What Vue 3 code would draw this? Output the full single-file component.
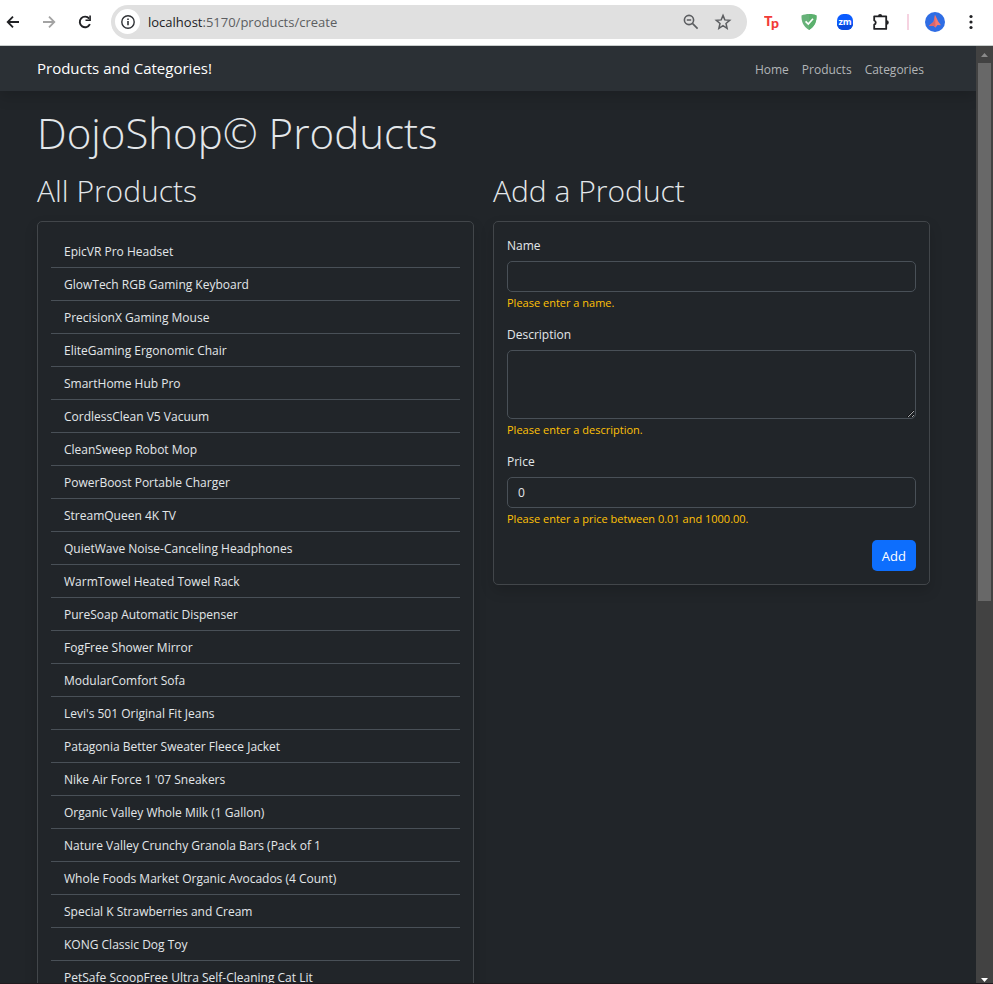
<script setup>
import { ref } from 'vue'

const products = [
  'EpicVR Pro Headset',
  'GlowTech RGB Gaming Keyboard',
  'PrecisionX Gaming Mouse',
  'EliteGaming Ergonomic Chair',
  'SmartHome Hub Pro',
  'CordlessClean V5 Vacuum',
  'CleanSweep Robot Mop',
  'PowerBoost Portable Charger',
  'StreamQueen 4K TV',
  'QuietWave Noise-Canceling Headphones',
  'WarmTowel Heated Towel Rack',
  'PureSoap Automatic Dispenser',
  'FogFree Shower Mirror',
  'ModularComfort Sofa',
  "Levi's 501 Original Fit Jeans",
  'Patagonia Better Sweater Fleece Jacket',
  "Nike Air Force 1 '07 Sneakers",
  'Organic Valley Whole Milk (1 Gallon)',
  'Nature Valley Crunchy Granola Bars (Pack of 1',
  'Whole Foods Market Organic Avocados (4 Count)',
  'Special K Strawberries and Cream',
  'KONG Classic Dog Toy',
  'PetSafe ScoopFree Ultra Self-Cleaning Cat Lit',
]

const name = ref('')
const description = ref('')
const price = ref('0')
</script>

<template>
  <div class="window">
    <header class="toolbar">
      <button class="tool" aria-label="Back">
        <svg width="16" height="16" viewBox="0 0 16 16" fill="none" stroke="#202124" stroke-width="1.8"><path d="M14 8H3M8 2.7L2.7 8L8 13.3" /></svg>
      </button>
      <button class="tool" aria-label="Forward">
        <svg width="16" height="16" viewBox="0 0 16 16" fill="none" stroke="#a3a3a3" stroke-width="1.8"><path d="M2 8h11M8 2.7L13.3 8L8 13.3" /></svg>
      </button>
      <button class="tool" aria-label="Reload">
        <svg width="16" height="16" viewBox="0 0 16 16"><path d="M12.9 10.2A5.3 5.3 0 1 1 12.2 4.6" fill="none" stroke="#202124" stroke-width="1.9" /><path d="M13.9 1.6V7H8.5V5.4h3.8V1.6z" fill="#202124" /></svg>
      </button>
      <div class="address">
        <button class="site-info" aria-label="View site information">
          <svg width="16" height="16" viewBox="0 0 16 16"><circle cx="8" cy="8" r="6.2" fill="none" stroke="#303236" stroke-width="1.4" /><path d="M7.2 7.1h1.6v4.2H7.2zM7.2 4.6h1.6v1.5H7.2z" fill="#303236" /></svg>
        </button>
        <div class="url"><span class="host">localhost</span>:5170/products/create</div>
        <button class="tool" aria-label="Zoom">
          <svg width="18" height="18" viewBox="0 0 18 18" fill="none" stroke="#5c5e61" stroke-width="1.6"><circle cx="7" cy="7" r="4.6" /><path d="M10.4 10.4L15.6 15.6M4.8 7h4.4" /></svg>
        </button>
        <button class="tool" aria-label="Bookmark this tab">
          <svg width="18" height="18" viewBox="0 0 18 18"><path d="M9 2.4L10.8 6.900L15.700 7.300L12 10.500L13.100 15.300L9 12.700L4.900 15.300L6 10.500L2.300 7.300L7.200 6.900z" fill="none" stroke="#5c5e61" stroke-width="1.5" /></svg>
        </button>
      </div>
      <div class="extensions">
        <button class="tool" aria-label="Tp extension">
          <svg width="18" height="18" viewBox="0 0 18 18"><text class="tp" x="0" y="13">T<tspan dy="2">p</tspan></text></svg>
        </button>
        <button class="tool" aria-label="Ad blocker">
          <svg width="18" height="18" viewBox="0 0 18 18"><path d="M9 1C11.5 1 14.5 1.500 16.500 2.500C16.800 8 15 13.500 9 17C3 13.500 1.200 8 1.500 2.500C3.500 1.500 6.500 1 9 1z" fill="#67b279" /><path d="M9 1C11.5 1 14.5 1.500 16.500 2.500C16.800 8 15 13.500 9 17z" fill="#5bb06d" /><path d="M5.600 8.300l2.700 2.800L13 5.800" fill="none" stroke="#fff" stroke-width="1.700" /></svg>
        </button>
        <button class="tool" aria-label="Zoom meetings">
          <svg width="18" height="18" viewBox="0 0 18 18"><rect x="1" y="1" width="16" height="16" rx="6.500" fill="#0b5cff" /><path d="M1 11h16a6 6 0 0 1-6 6H7a6 6 0 0 1-6-6z" fill="#084be0" /><text class="zm" x="9" y="12" text-anchor="middle">zm</text></svg>
        </button>
        <button class="tool" aria-label="Extensions">
          <svg width="18" height="18" viewBox="0 0 18 18"><path d="M2.200 3.300h12v12.600h-12v-4.200a2.200 2.200 0 0 0 0-4.200z" fill="none" stroke="#202124" stroke-width="1.800" stroke-linejoin="round" /><path d="M6 3.200a2.100 2.100 0 0 1 4.200 0zM14.600 7.300a2.200 2.200 0 0 1 0 4.400z" fill="#202124" /></svg>
        </button>
        <span class="separator"></span>
        <button class="tool" aria-label="Profile">
          <svg width="20" height="20" viewBox="0 0 20 20"><circle cx="10" cy="10" r="10" fill="#2f6de4" /><path d="M10 2.700L13.200 9.500L16 13.200L12.500 13L10.500 15.500L8.500 13.800L3.800 13.900L8.500 9.800z" fill="#f47b72" /><path d="M10 2.700L10.500 15.500L8.500 13.800L3.800 13.900L9.200 9.500z" fill="#d9646c" /></svg>
        </button>
        <button class="tool menu" aria-label="Menu">
          <svg width="18" height="18" viewBox="0 0 18 18" fill="#202124"><circle cx="9" cy="3.500" r="1.600" /><circle cx="9" cy="9" r="1.600" /><circle cx="9" cy="14.500" r="1.600" /></svg>
        </button>
      </div>
    </header>

    <div class="viewport">
      <div class="page">
        <nav class="navbar">
          <a class="brand" href="#">Products and Categories!</a>
          <div class="links">
            <a href="#">Home</a>
            <a href="#">Products</a>
            <a href="#">Categories</a>
          </div>
        </nav>
        <main class="container">
          <h1>DojoShop© Products</h1>
          <div class="columns">
            <section>
              <h2>All Products</h2>
              <ul class="card list">
                <li v-for="product in products" :key="product"><a href="#">{{ product }}</a></li>
              </ul>
            </section>
            <section>
              <h2>Add a Product</h2>
              <form class="card form" @submit.prevent>
                <div class="field">
                  <label for="name">Name</label>
                  <input id="name" v-model="name" type="text" />
                  <p class="error">Please enter a name.</p>
                </div>
                <div class="field">
                  <label for="description">Description</label>
                  <textarea id="description" v-model="description"></textarea>
                  <p class="error">Please enter a description.</p>
                </div>
                <div class="field">
                  <label for="price">Price</label>
                  <input id="price" v-model="price" type="text" inputmode="decimal" />
                  <p class="error">Please enter a price between 0.01 and 1000.00.</p>
                </div>
                <button class="submit" type="submit">Add</button>
              </form>
            </section>
          </div>
        </main>
      </div>
      <div class="scrollbar" aria-hidden="true">
        <svg width="17" height="17" viewBox="0 0 17 17"><path d="M5 11L8.500 7L12 11z" fill="#8a8a8a" /></svg>
        <div class="track"><div class="thumb"></div></div>
        <svg width="17" height="8" viewBox="0 0 17 8"><path d="M5 3h7L8.500 7z" fill="#fff" /></svg>
      </div>
    </div>
  </div>
</template>

<style>
body {
  background: #212529;
}
</style>

<style scoped>
* {
  box-sizing: border-box;
}

.window {
  display: flex;
  flex-direction: column;
  height: 100vh;
  overflow: hidden;
  font-family: "Open Sans", "Noto Sans", sans-serif;
  font-size: 12px;
  line-height: 20px;
  color: #e3e7ea;
}

a {
  color: inherit;
  text-decoration: none;
}

button {
  border: 0;
  padding: 0;
  background: none;
  font: inherit;
  cursor: pointer;
}

.toolbar {
  display: flex;
  align-items: center;
  flex: none;
  height: 46px;
  padding: 0 13px 2px 5px;
  gap: 20px;
  background: #fff;
  border-bottom: 1px solid #c9cecd;
}

.tool {
  display: flex;
  flex: none;
}

.address {
  display: flex;
  align-items: center;
  flex: 1;
  height: 34px;
  margin: 0 -3px 0 -2px;
  padding: 0 15px 0 4px;
  gap: 14px;
  border-radius: 17px;
  background: #e0e0e0;
}

.site-info {
  display: grid;
  place-items: center;
  width: 25px;
  height: 25px;
  border-radius: 50%;
  background: #fff;
}

.url {
  flex: 1;
  margin-left: -6px;
  font-size: 13px;
  color: #5c5e61;
}

.host {
  color: #202124;
}

.extensions {
  display: flex;
  align-items: center;
  gap: 18px;
}

.separator {
  width: 2px;
  height: 16px;
  margin: 0 -2px 0 -1px;
  background: #f6d3e1;
}

.menu {
  margin-left: -1px;
}

.tp {
  font: 900 14px Lato, sans-serif;
  fill: #f23c38;
}

.zm {
  font: 700 9px "Open Sans", sans-serif;
  fill: #fff;
}

.viewport {
  display: flex;
  flex: 1;
  min-height: 0;
  border-bottom: 1px solid #201a1e;
}

.page {
  flex: 1;
  min-width: 0;
  overflow: hidden;
  background: #212529;
}

.navbar {
  display: flex;
  align-items: center;
  justify-content: space-between;
  height: 45px;
  padding: 0 52px 0 37px;
  background: #2b3035;
  box-shadow: 0 6px 13px rgba(0, 0, 0, 0.15);
}

.brand {
  padding-bottom: 2px;
  font-size: 15px;
  color: #fff;
}

.links {
  display: flex;
  gap: 13px;
  padding-top: 2px;
  color: #b2b5b8;
}

.container {
  padding: 13px 46px 0 37px;
}

h1,
h2 {
  margin: 0;
  font-weight: 300;
}

h1 {
  margin-bottom: 8px;
  font-size: 42px;
  line-height: 58px;
}

h2 {
  margin-bottom: 9px;
  font-size: 30px;
  line-height: 42px;
}

.columns {
  display: grid;
  grid-template-columns: 1fr 1fr;
  gap: 19px;
}

.card {
  margin: 0;
  padding: 13px;
  border: 1px solid #42464a;
  border-radius: 5px;
  box-shadow: 0 6px 13px rgba(0, 0, 0, 0.15);
}

.list {
  list-style: none;
}

.list li {
  padding: 7px 13px 5px;
  border-bottom: 1px solid #495057;
}

.list a {
  display: block;
}

.form {
  display: flex;
  flex-direction: column;
  gap: 13px;
}

.field {
  display: flex;
  flex-direction: column;
}

.field label {
  padding: 1px 0 5px;
}

input,
textarea {
  width: 100%;
  height: 31px;
  margin: 0;
  padding: 4px 10px;
  border: 1px solid #495057;
  border-radius: 5px;
  outline: 0;
  background: #212529;
  color: #e3e7ea;
  font: inherit;
  color-scheme: dark;
}

textarea {
  height: 69px;
  resize: vertical;
}

.error {
  margin: 2px 0 0;
  font-size: 11px;
  line-height: 17px;
  color: #ffc107;
}

.submit {
  align-self: flex-end;
  height: 31px;
  padding: 0 10px;
  border-radius: 5px;
  background: #0d6efd;
  color: #fff;
  font-size: 13px;
}

.scrollbar {
  display: flex;
  flex-direction: column;
  flex: none;
  width: 17px;
  background: #424242;
}

.scrollbar svg {
  flex: none;
}

.track {
  flex: 1;
  padding: 0 2px;
}

.thumb {
  height: 59%;
  background: #686868;
}
</style>
